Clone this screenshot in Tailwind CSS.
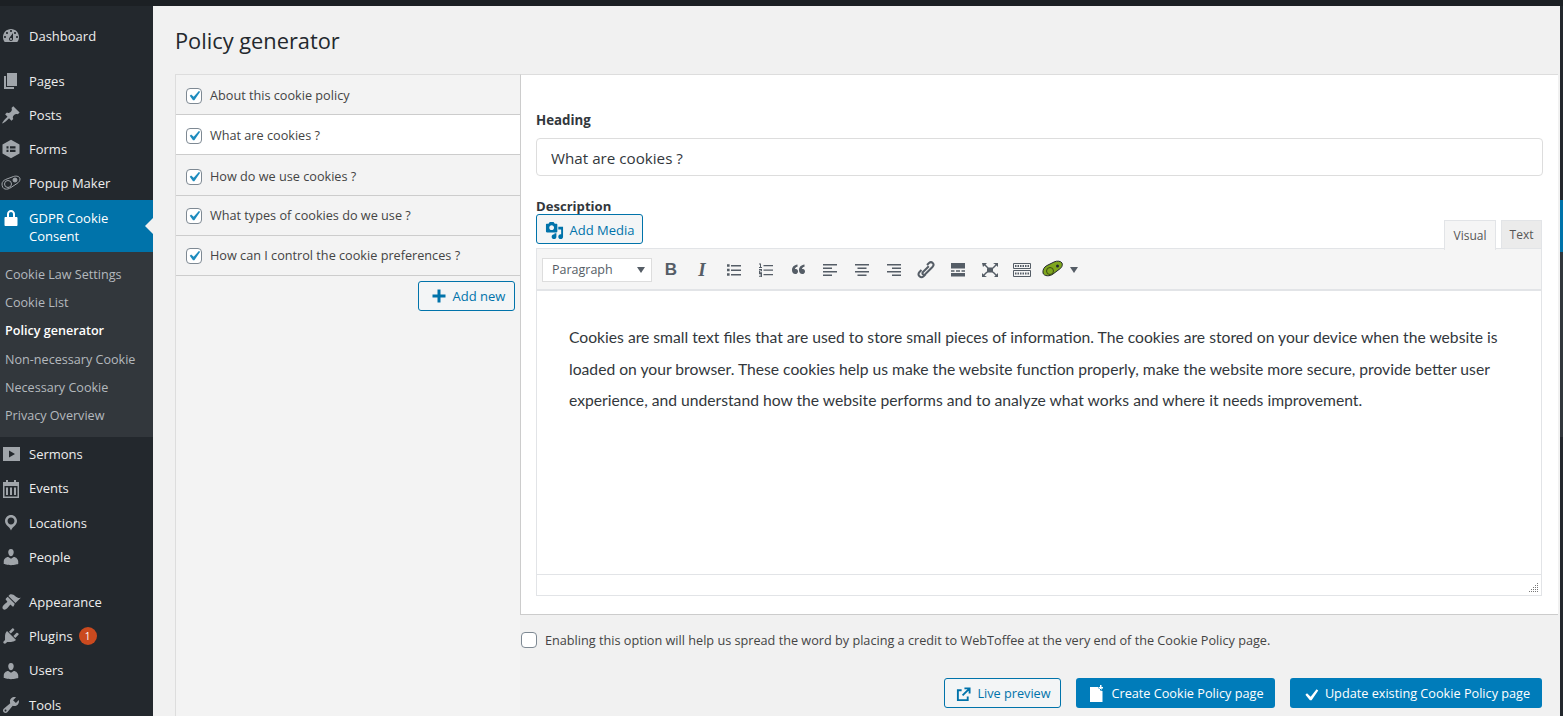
<!DOCTYPE html>
<html lang="en">
<head>
    <meta charset="UTF-8">
    <title>Policy generator</title>
    <script src="https://cdn.jsdelivr.net/npm/@tailwindcss/browser@4"></script>
</head>
<body class="h-[716px] w-[1563px] overflow-hidden bg-[#f1f1f1] font-['Open_Sans',sans-serif] text-[#444]">

    <!-- Top strip -->
    <div class="h-[6px] bg-[#1c2024]"></div>

    <div class="flex h-[710px]">
        <!-- Admin menu -->
        <aside class="w-[153px] shrink-0 bg-[#23282d] pt-[13px] text-[13px] text-[#eee]">
            <a class="mb-[11px] flex h-[34px] items-center gap-[8px] pl-[1px]">
                <svg class="size-5 fill-[#a0a5aa]" viewBox="0 0 20 20"><path d="M3.76 16h12.48c1.1-1.37 1.76-3.11 1.76-5 0-4.42-3.58-8-8-8s-8 3.58-8 8c0 1.89.66 3.63 1.76 5zM10 4c.55 0 1 .45 1 1s-.45 1-1 1-1-.45-1-1 .45-1 1-1zM6 6c.55 0 1 .45 1 1s-.45 1-1 1-1-.45-1-1 .45-1 1-1zm8 0c.55 0 1 .45 1 1s-.45 1-1 1-1-.45-1-1 .45-1 1-1zm-5.37 5.55L12 7v6c0 1.1-.9 2-2 2s-2-.9-2-2c0-.57.24-1.08.63-1.45zM4 10c.55 0 1 .45 1 1s-.45 1-1 1-1-.45-1-1 .45-1 1-1zm12 0c.55 0 1 .45 1 1s-.45 1-1 1-1-.45-1-1 .45-1 1-1zm-5 3c0-.55-.45-1-1-1s-1 .45-1 1 .45 1 1 1 1-.45 1-1z"/></svg>
                <span class="pt-[2px]">Dashboard</span>
            </a>
            <a class="flex h-[34px] items-center gap-[8px] pl-[1px]">
                <svg class="size-5 fill-[#a0a5aa]" viewBox="0 0 20 20"><path d="M6 15V2h10v13H6zm-1 1h8v2H3V5h2v11z"/></svg>
                <span class="pt-[2px]">Pages</span>
            </a>
            <a class="flex h-[34px] items-center gap-[8px] pl-[1px]">
                <svg class="size-5 fill-[#a0a5aa]" viewBox="0 0 20 20"><path d="M10.44 3.02l1.82-1.82 6.36 6.35-1.83 1.82c-1.05-.68-2.48-.57-3.41.36l-.75.75c-.92.93-1.04 2.35-.35 3.41l-1.83 1.82-2.41-2.41-2.8 2.79c-.42.42-3.38 2.71-3.8 2.29s1.86-3.39 2.28-3.81l2.79-2.79L4.1 9.36l1.83-1.82c1.05.69 2.48.57 3.4-.36l.75-.75c.93-.92 1.05-2.35.36-3.41z"/></svg>
                <span class="pt-[2px]">Posts</span>
            </a>
            <a class="flex h-[34px] items-center gap-[8px] pl-[1px]">
                <svg class="size-5 fill-[#a0a5aa]" viewBox="0 0 20 20"><path fill-rule="evenodd" d="M10 .8l8.500 4.700v9L10 19.200l-8.500-4.700v-9zM5.500 7.300v2.200h2V7.300zm3.500 0v2.200h5.500V7.300zm-3.500 3.400v2.200h2v-2.200zm3.500 0v2.200h5.500v-2.200z"/></svg>
                <span class="pt-[2px]">Forms</span>
            </a>
            <a class="flex h-[34px] items-center gap-[8px] pl-[1px]">
                <svg class="size-5" viewBox="0 0 20 20" fill="none" stroke="#a0a5aa"><path d="M1 11c0-2 1.500-3.500 3.500-4.500l8-3c3-1 6.500 0 6.500 2.500 0 2-1 3-3 4.500l-6 4c-2 1.300-4 2-6 1.500-2-.5-3-2.500-3-5z"/><circle cx="7" cy="11" r="3.500"/><circle cx="14" cy="7" r="2" fill="#a0a5aa"/></svg>
                <span class="pt-[2px]">Popup Maker</span>
            </a>
            <a class="relative flex h-[52px] gap-[8px] bg-[#0073aa] pl-[1px] pt-[8px] leading-[18px] text-white">
                <svg class="size-5 shrink-0 fill-white" viewBox="0 0 20 20"><path d="M14 9h1.500c.55 0 1 .45 1 1v7c0 .55-.45 1-1 1h-11c-.55 0-1-.45-1-1v-7c0-.55.45-1 1-1H6V6c0-2.200 1.800-4 4-4s4 1.800 4 4v3zm-2 0V6c0-1.100-.9-2-2-2s-2 .9-2 2v3h4z"/></svg>
                <span class="pt-[1px]">GDPR Cookie Consent</span>
                <span class="absolute right-0 top-[18px] border-y-[8px] border-r-[8px] border-y-transparent border-r-[#f1f1f1]"></span>
            </a>
            <div class="flex h-[185px] flex-col bg-[#32373c] py-[8px] text-[12.600px] text-[#b4b9be]">
                <a class="flex h-[28px] items-center pl-[5px] pt-[2px]">Cookie Law Settings</a>
                <a class="flex h-[28px] items-center pl-[5px] pt-[2px]">Cookie List</a>
                <a class="flex h-[29px] items-center pl-[5px] pt-[2px] font-semibold text-white">Policy generator</a>
                <a class="flex h-[28px] items-center pl-[5px] pt-[2px]">Non-necessary Cookie</a>
                <a class="flex h-[28px] items-center pl-[5px] pt-[2px]">Necessary Cookie</a>
                <a class="flex h-[28px] items-center pl-[5px] pt-[2px]">Privacy Overview</a>
            </div>
            <a class="flex h-[34px] items-center gap-[8px] pl-[1px]">
                <svg class="size-5 fill-[#a0a5aa]" viewBox="0 0 20 20"><path fill-rule="evenodd" d="M2 3h17v14H2zm6 3.500v7l6-3.500z"/></svg>
                <span class="pt-[2px]">Sermons</span>
            </a>
            <a class="flex h-[35px] items-center gap-[8px] pl-[1px]">
                <svg class="size-5 fill-[#a0a5aa]" viewBox="0 0 20 20"><path fill-rule="evenodd" d="M5 1h2v2h6V1h2v2h3v16H2V3h3zM3.500 7v10.500h13V7zM5 8.500h2V16H5zm4 0h2V16H9zm4 0h2V16h-2z"/></svg>
                <span class="pt-[1px]">Events</span>
            </a>
            <a class="flex h-[34px] items-center gap-[8px] pl-[1px]">
                <svg class="size-5 fill-[#a0a5aa]" viewBox="0 0 20 20"><path d="M10 2C6.690 2 4 4.690 4 8c0 2.020 1.170 3.710 2.530 4.890.43.37 1.180.96 1.850 1.830.74.97 1.410 2.010 1.620 2.710.21-.7.88-1.740 1.620-2.710.67-.87 1.420-1.460 1.850-1.830C14.830 11.710 16 10.020 16 8c0-3.310-2.690-6-6-6zm0 2.560c1.900 0 3.440 1.540 3.440 3.440S11.900 11.440 10 11.440 6.560 9.900 6.560 8 8.100 4.560 10 4.560z"/></svg>
                <span class="pt-[2px]">Locations</span>
            </a>
            <a class="mb-[11px] flex h-[34px] items-center gap-[8px] pl-[1px]">
                <svg class="size-5 fill-[#a0a5aa]" viewBox="0 0 20 20"><path d="M10 9.250c-2.270 0-2.730-3.440-2.730-3.440C7 4.020 7.820 2 9.970 2c2.160 0 2.980 2.020 2.710 3.810 0 0-.41 3.440-2.680 3.440zm0 2.570L12.720 10c2.390 0 4.520 2.330 4.520 4.530v2.490s-3.650 1.130-7.240 1.130c-3.650 0-7.240-1.130-7.240-1.130v-2.490c0-2.250 1.940-4.480 4.470-4.480z"/></svg>
                <span class="pt-[2px]">People</span>
            </a>
            <a class="flex h-[34px] items-center gap-[8px] pl-[1px]">
                <svg class="size-5 fill-[#a0a5aa]" viewBox="0 0 20 20"><path d="M14.480 11.060L7.410 3.990l1.500-1.500c.5-.56 2.300-.47 3.510.32 1.210.8 1.430 1.280 2.910 2.100 1.180.64 2.450 1.260 4.450.85zM13.770 11.770 6.700 4.700 4.930 6.470c-.39.39-.39 1.020 0 1.410l1.060 1.060c.39.39.39 1.030 0 1.420-.6.6-1.430 1.110-2.210 1.690-.35.26-.7.53-1.010.84-1.430 1.430-1.760 3.200-.74 4.220 1.020 1.020 2.790.69 4.220-.74.31-.31.58-.66.84-1.010.58-.78 1.090-1.610 1.690-2.210.39-.39 1.030-.39 1.420 0l1.060 1.060c.39.39 1.020.39 1.410 0z"/></svg>
                <span class="pt-[2px]">Appearance</span>
            </a>
            <a class="flex h-[34px] items-center gap-[8px] pl-[1px]">
                <svg class="size-5 fill-[#a0a5aa]" viewBox="0 0 20 20"><path d="M13.110 4.360L9.870 7.600 8 5.730l3.240-3.240c.35-.34 1.050-.2 1.560.32.52.51.66 1.210.31 1.550zm-8 1.770l.91-1.120 9.010 9.010-1.190.84c-.71.71-2.630 1.160-3.820 1.160H6.140L4.900 17.260c-.59.59-1.540.59-2.120 0-.59-.58-.59-1.530 0-2.120l1.240-1.240v-3.880c0-1.130.4-3.190 1.090-3.890zm7.260 3.970l3.240-3.240c.34-.35 1.040-.21 1.550.31.52.51.66 1.210.31 1.550l-3.240 3.250z"/></svg>
                <span class="pt-[2px]">Plugins</span>
                <span class="-ml-[2px] flex size-[18px] items-center justify-center rounded-full bg-[#ca4a1f] text-[10px] text-white">1</span>
            </a>
            <a class="flex h-[35px] items-center gap-[8px] pl-[1px]">
                <svg class="size-5 fill-[#a0a5aa]" viewBox="0 0 20 20"><path d="M10 9.250c-2.270 0-2.730-3.440-2.730-3.440C7 4.020 7.820 2 9.970 2c2.160 0 2.980 2.020 2.710 3.810 0 0-.41 3.440-2.680 3.440zm0 2.570L12.720 10c2.390 0 4.520 2.330 4.520 4.530v2.490s-3.650 1.130-7.240 1.130c-3.650 0-7.240-1.130-7.240-1.130v-2.490c0-2.250 1.940-4.480 4.470-4.480z"/></svg>
                <span class="pt-[1px]">Users</span>
            </a>
            <a class="flex h-[34px] items-center gap-[8px] pl-[1px]">
                <svg class="size-5 fill-[#a0a5aa]" viewBox="0 0 20 20"><path d="M16.680 9.770c-1.340 1.340-3.300 1.670-4.950.99l-5.410 6.520c-.99.99-2.590.99-3.580 0s-.99-2.590 0-3.570l6.520-5.420c-.68-1.650-.35-3.610.99-4.950 1.280-1.280 3.120-1.620 4.720-1.060l-2.890 2.890 2.820 2.820 2.860-2.870c.53 1.580.18 3.390-1.080 4.670zM3.810 16.210c.4.39 1.040.39 1.430 0 .4-.4.4-1.040 0-1.430-.39-.4-1.030-.4-1.430 0-.39.39-.39 1.030 0 1.430z"/></svg>
                <span class="pt-[2px]">Tools</span>
            </a>
        </aside>

        <!-- Main content -->
        <main class="flex min-w-0 flex-1 flex-col pl-[22px] pr-[2px]">
            <h1 class="flex h-[68px] shrink-0 items-center pt-[2px] text-[21.800px] text-[#23282d]">Policy generator</h1>

            <div class="flex flex-1">
                <!-- Section list -->
                <div class="w-[345px] shrink-0 border-l border-t border-[#ddd] bg-[#f3f3f3] text-[12.680px]">
                    <div class="flex h-[40px] items-center gap-[8px] border-b border-[#ccc] pl-[10px] pt-[3px]">
                        <span class="flex size-[16px] items-center justify-center rounded-[4px] border border-[#7e8993] bg-white"><svg class="size-[20px] shrink-0 fill-[#1e8cbe]" viewBox="0 0 20 20"><path d="M14.830 4.890l1.340.94-5.810 8.380H9.020L5.780 9.670l1.340-1.250 2.570 2.400z"/></svg></span>
                        <span>About this cookie policy</span>
                    </div>
                    <div class="flex h-[40px] items-center gap-[8px] border-b border-[#ccc] bg-white pl-[10px] pt-[3px]">
                        <span class="flex size-[16px] items-center justify-center rounded-[4px] border border-[#7e8993] bg-white"><svg class="size-[20px] shrink-0 fill-[#1e8cbe]" viewBox="0 0 20 20"><path d="M14.830 4.890l1.340.94-5.810 8.380H9.020L5.780 9.670l1.340-1.250 2.570 2.400z"/></svg></span>
                        <span>What are cookies ?</span>
                    </div>
                    <div class="flex h-[41px] items-center gap-[8px] border-b border-[#ccc] pl-[10px] pt-[3px]">
                        <span class="flex size-[16px] items-center justify-center rounded-[4px] border border-[#7e8993] bg-white"><svg class="size-[20px] shrink-0 fill-[#1e8cbe]" viewBox="0 0 20 20"><path d="M14.830 4.890l1.340.94-5.810 8.380H9.020L5.780 9.670l1.340-1.250 2.570 2.400z"/></svg></span>
                        <span>How do we use cookies ?</span>
                    </div>
                    <div class="flex h-[40px] items-center gap-[8px] border-b border-[#ccc] pl-[10px] pt-[1px]">
                        <span class="flex size-[16px] items-center justify-center rounded-[4px] border border-[#7e8993] bg-white"><svg class="size-[20px] shrink-0 fill-[#1e8cbe]" viewBox="0 0 20 20"><path d="M14.830 4.890l1.340.94-5.810 8.380H9.020L5.780 9.670l1.340-1.250 2.570 2.400z"/></svg></span>
                        <span>What types of cookies do we use ?</span>
                    </div>
                    <div class="flex h-[40px] items-center gap-[8px] border-b border-[#ccc] pl-[10px] pt-[1px]">
                        <span class="flex size-[16px] items-center justify-center rounded-[4px] border border-[#7e8993] bg-white"><svg class="size-[20px] shrink-0 fill-[#1e8cbe]" viewBox="0 0 20 20"><path d="M14.830 4.890l1.340.94-5.810 8.380H9.020L5.780 9.670l1.340-1.250 2.570 2.400z"/></svg></span>
                        <span>How can I control the cookie preferences ?</span>
                    </div>
                    <div class="flex justify-end pr-[5px] pt-[5px]">
                        <button class="flex h-[30px] w-[97px] items-center justify-center gap-[6px] rounded-[3px] border border-[#0073aa] bg-[#f3f5f6] pl-[3px] text-[13px] text-[#0073aa]">
                            <svg class="size-[16px] fill-[#0073aa]" viewBox="0 0 16 16"><path d="M6.500 1.500h3v5h5v3h-5v5h-3v-5h-5v-3h5z"/></svg>
                            <span class="pt-[2px]">Add new</span>
                        </button>
                    </div>
                </div>

                <!-- Right column -->
                <div class="flex min-w-0 flex-1 flex-col">
                    <div class="h-[541px] border-b border-l border-t border-[#ccc] border-t-[#ddd] bg-white pl-[15px] pr-[14px] pt-[36px] text-[#32373c]">
                        <label class="block text-[13.300px] font-bold leading-[18px]">Heading</label>
                        <input class="mt-[9px] block h-[38px] w-[1007px] rounded-[4px] border border-[#ddd] pl-[14px] pr-[13px] pt-[1px] text-[15.200px] text-[#32373c]" value="What are cookies ?">
                        <label class="mt-[21px] block text-[13.100px] font-bold leading-[18px]">Description</label>

                        <div class="-mt-[1px] flex h-[34px] items-start justify-between">
                            <button class="flex h-[30px] w-[107px] items-center justify-center gap-[6px] rounded-[3px] border border-[#0073aa] bg-[#f3f5f6] pt-[2px] text-[13px] text-[#0073aa]">
                                <svg class="size-[19px] fill-[#0073aa]" viewBox="0 0 20 20"><path fill-rule="evenodd" d="M13 11V4c0-.55-.45-1-1-1h-1.670L9 1H5L3.670 3H2c-.55 0-1 .45-1 1v7c0 .55.45 1 1 1h10c.55 0 1-.45 1-1zM7 4.500c1.380 0 2.500 1.120 2.500 2.500S8.380 9.500 7 9.500 4.500 8.380 4.500 7 5.620 4.500 7 4.500zM14 6h5v10.500c0 1.380-1.120 2.500-2.500 2.500S14 17.880 14 16.500s1.120-2.500 2.500-2.500c.17 0 .34.02.5.050V9h-3V6zm-4 8.050V13h2v3.500c0 1.380-1.120 2.500-2.500 2.500S7 17.880 7 16.500 8.120 14 9.500 14c.17 0 .34.02.5.050z"/></svg>
                                <span class="pt-[2px]">Add Media</span>
                            </button>
                            <div class="mr-[2px] mt-[6px] flex h-[29px] gap-[5px] text-[12px]">
                                <span class="z-10 flex h-[30px] w-[52px] items-center justify-center border border-b-0 border-[#e2e4e7] bg-[#f5f5f5] text-[#555]">Visual</span>
                                <span class="flex w-[41px] items-center justify-center border border-[#e2e4e7] bg-[#ebebeb] text-[#555]">Text</span>
                            </div>
                        </div>

                        <!-- Editor -->
                        <div class="w-[1006px] border border-t-0 border-[#e2e4e7]">
                            <div class="flex h-[43px] items-center border-b-[2px] border-t border-[#e2e4e7] bg-[#f5f5f5] pl-[5px] pt-[2px] text-[#555d66]">
                                <div class="flex h-[24px] w-[110px] items-center justify-between border border-[#ddd] bg-white pl-[9px] pr-[6px] text-[12.500px]">
                                    Paragraph
                                    <span class="border-x-[4px] border-t-[6px] border-x-transparent border-t-[#555d66]"></span>
                                </div>
                                <div class="ml-[3px] flex items-center">
                                    <span class="flex w-[32px] justify-center font-['Liberation_Sans',sans-serif] text-[17px] font-bold leading-[20px]">B</span>
                                    <span class="-ml-[1px] flex w-[32px] justify-center font-['Liberation_Serif',serif] text-[19px] font-bold italic leading-[20px]">I</span>
                                    <span class="flex w-[32px] justify-center"><svg class="size-5 fill-[#555d66]" viewBox="0 0 20 20"><path d="M7 5h10v1.500H7zm0 4.500h10V11H7zM7 14h10v1.500H7zM3 4.200h2.600v2.600H3zm0 4.500h2.600v2.600H3zm0 4.500h2.600v2.600H3z"/></svg></span>
                                    <span class="flex w-[32px] justify-center"><svg class="size-5 fill-[#555d66]" viewBox="0 0 20 20"><path d="M7.500 5H17v1.200H7.500zm0 4.500H17v1.200H7.500zm0 4.500H17v1.200H7.500zM3 3.500h2v3.600h1V8H3v-.9h1V4.500H3zm0 5.500h3v2.300H4v.9h2v.9H3v-2.600h2v-.6H3zm0 4h3v4H3v-.8h2v-.8H3.500v-.8H5v-.7H3z"/></svg></span>
                                    <span class="flex w-[32px] justify-center"><svg class="size-5 fill-[#555d66]" viewBox="0 0 20 20"><path d="M9.500 4.500v2.200C7.800 7 7 8 7 9.100c.3-.1.6-.1.9-.1 1.300 0 2.100 1 2.100 2.400 0 1.500-1.200 2.600-2.700 2.600C5.400 14 4 12.500 4 10.200c0-3 2-5.300 5.500-5.700zm7 0v2.200C14.800 7 14 8 14 9.100c.3-.1.6-.1.900-.1 1.300 0 2.100 1 2.100 2.400 0 1.500-1.200 2.600-2.700 2.600-1.900 0-3.300-1.500-3.300-3.800 0-3 2-5.300 5.500-5.700z"/></svg></span>
                                    <span class="flex w-[32px] justify-center"><svg class="size-5 fill-[#555d66]" viewBox="0 0 20 20"><path d="M3 4h14v1.600H3zm0 3.500h9v1.600H3zM3 11h14v1.600H3zm0 3.500h9v1.600H3z"/></svg></span>
                                    <span class="flex w-[32px] justify-center"><svg class="size-5 fill-[#555d66]" viewBox="0 0 20 20"><path d="M3 4h14v1.600H3zm2.500 3.500h9v1.600h-9zM3 11h14v1.600H3zm2.500 3.500h9v1.600h-9z"/></svg></span>
                                    <span class="flex w-[32px] justify-center"><svg class="size-5 fill-[#555d66]" viewBox="0 0 20 20"><path d="M3 4h14v1.600H3zm5 3.500h9v1.600H8zM3 11h14v1.600H3zm5 3.500h9v1.600H8z"/></svg></span>
                                    <span class="flex w-[32px] justify-center"><svg class="size-5" viewBox="0 0 20 20" fill="none" stroke="#555d66" stroke-width="2"><path d="M11 5l2-2c1.200-1 2.800-.9 3.700 0 1 1 1 2.600 0 3.700l-7.500 7.500c-.8.7-1.700.7-2.300.1-.6-.6-.6-1.500.1-2.300l5.800-5.700M5.500 10l-2 2c-1.200 1.300-1.200 3 0 4.200 1.100 1.100 2.900 1.100 4.100 0l2-2"/></svg></span>
                                    <span class="flex w-[32px] justify-center"><svg class="size-5 fill-[#555d66]" viewBox="0 0 20 20"><path d="M3 3h14v5.500H3zm0 7.300h3.500v1.500H3zm5 0h4v1.500H8zm5.500 0H17v1.500h-3.500zM3 13h14v3.500H3z"/></svg></span>
                                    <span class="flex w-[32px] justify-center"><svg class="size-5 fill-[#555d66]" viewBox="0 0 20 20"><path d="M7 7.500h6v5H7zM2 3h5L5.500 4.500l3 3-1 1-3-3L3 7zm16 0v4l-1.500-1.500-3 3-1-1 3-3L13 3zM2 17v-4l1.500 1.500 3-3 1 1-3 3L7 17zm16 0h-4l1.500-1.500-3-3 1-1 3 3L18 13z"/></svg></span>
                                    <span class="flex w-[32px] justify-center"><svg class="size-5" viewBox="0 0 20 20" fill="none" stroke="#555d66"><path d="M1.500 3.500h17v5h-17zm0 7h17v6h-17z"/><path stroke-dasharray="1.500 1" stroke-width="2" d="M3 6h14M3 13.500h14"/></svg></span>
                                    <span class="flex w-[30px] justify-center"><svg class="size-[22px]" viewBox="0 0 22 22"><path fill="#7fa61e" stroke="#23282d" d="M1 14c-.5-3 1-6 4-7.500l7-3.500c3-1.500 7-1 8 1 1 2.500-.5 5-3 6.500l-6 4.500c-3 2.500-9 2.500-10-1z"/><circle cx="8" cy="12" r="3.500" fill="none" stroke="#3c4a12"/><circle cx="15.500" cy="7" r="1.500" fill="#23282d"/></svg></span>
                                    <span class="ml-[2px] border-x-[4px] border-t-[6px] border-x-transparent border-t-[#555d66]"></span>
                                </div>
                            </div>
                            <div class="h-[283px] px-[32px] pt-[31px] font-['Lato',sans-serif] text-[15.680px] leading-[31.500px] text-[#32373c]">
                                Cookies are small text files that are used to store small pieces of information. The cookies are stored on your device when the website is loaded on your browser. These cookies help us make the website function properly, make the website more secure, provide better user experience, and understand how the website performs and to analyze what works and where it needs improvement.
                            </div>
                            <div class="relative h-[21px] border-t border-[#e2e4e7]">
                                <svg class="absolute bottom-[2px] right-[2px] size-[10px] fill-[#777]" viewBox="0 0 10 10"><path d="M8 0h1v1H8zM6 2h1v1H6zm2 0h1v1H8zM4 4h1v1H4zm2 0h1v1H6zm2 0h1v1H8zM2 6h1v1H2zm2 0h1v1H4zm2 0h1v1H6zm2 0h1v1H8zM0 8h1v1H0zm2 0h1v1H2zm2 0h1v1H4zm2 0h1v1H6zm2 0h1v1H8z"/></svg>
                            </div>
                        </div>
                    </div>

                    <label class="mt-[17px] flex h-[16px] items-center gap-[8px] pl-[1px] text-[12.680px] text-[#444]">
                        <span class="size-[16px] rounded-[4px] border border-[#7e8993] bg-white"></span>
                        <span class="pt-[1px]">Enabling this option will help us spread the word by placing a credit to WebToffee at the very end of the Cookie Policy page.</span>
                    </label>

                    <div class="mt-[30px] flex justify-end gap-[15px] pr-[16px] text-[12.700px]">
                        <button class="flex h-[30px] w-[117px] items-center justify-center gap-[6px] rounded-[3px] border border-[#0073aa] bg-[#f3f5f6] pl-[2px] pt-[2px] text-[#0073aa]">
                            <svg class="size-[15px] fill-none stroke-[#0073aa] stroke-2" viewBox="0 0 16 16"><path d="M6 3.500H2v10.500h10.500V10M7 9l7-7M9 1.500h5.500V7"/></svg>
                            Live preview
                        </button>
                        <button class="flex h-[30px] w-[199px] items-center justify-center gap-[6px] rounded-[3px] bg-[#007cba] pt-[2px] text-white">
                            <svg class="size-[18px] fill-white" viewBox="0 0 18 18"><path fill-rule="evenodd" d="M3 2h9v2h2v2h1.500v11H3zM13 0h1.500v2H16v1.500h-1.500v2H13v-2h-1.500V2H13z"/></svg>
                            Create Cookie Policy page
                        </button>
                        <button class="flex h-[30px] w-[252px] items-center justify-center gap-[6px] rounded-[3px] bg-[#007cba] pl-[2px] pt-[2px] text-white">
                            <svg class="size-[15px] fill-white" viewBox="0 0 16 16"><path d="M13.400 2.500l1.800 1.300-7.100 10.200H6.300L1.500 8.300l1.700-1.600 3.900 3.600z"/></svg>
                            Update existing Cookie Policy page
                        </button>
                    </div>
                </div>
            </div>
        </main>

        <!-- Repeated admin menu at the right edge -->
        <div class="flex w-[3px] shrink-0 flex-col bg-[#23282d]">
            <div class="mt-[194px] h-[52px] bg-[#0073aa]"></div>
            <div class="h-[185px] bg-[#32373c]"></div>
        </div>
    </div>
</body>
</html>
